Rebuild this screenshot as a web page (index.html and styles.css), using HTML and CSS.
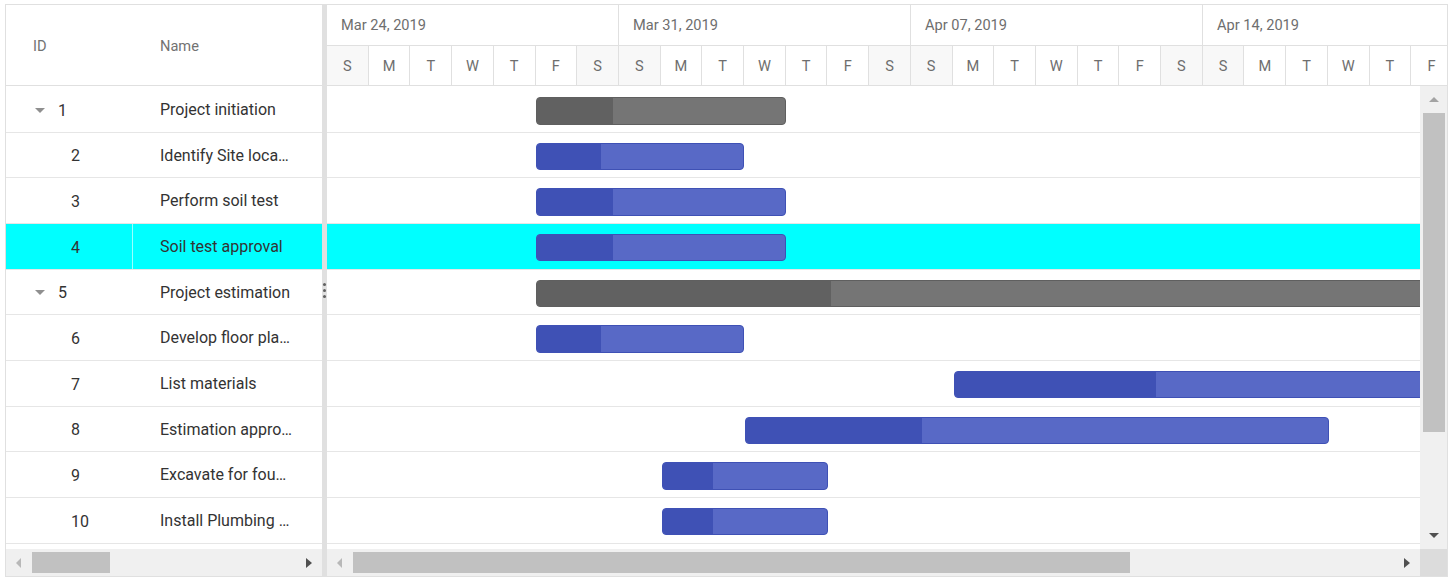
FILE: index.html
```html
<!DOCTYPE html>
<html>
<head>
  <meta charset="UTF-8" />
  <link rel="stylesheet" href="styles.css">
</head>
<body>

<div class="gantt">

  <div class="grid-pane">
    <div class="grid-header">
      <div class="hcell id">ID</div>
      <div class="hcell name">Name</div>
    </div>
    <div class="grid-body">
      <div class="row"><div class="cell id"><span class="caret"></span>1</div><div class="cell name">Project initiation</div></div>
      <div class="row"><div class="cell id child">2</div><div class="cell name">Identify Site location</div></div>
      <div class="row"><div class="cell id child">3</div><div class="cell name">Perform soil test</div></div>
      <div class="row selected"><div class="cell id child">4</div><div class="cell name">Soil test approval</div></div>
      <div class="row"><div class="cell id"><span class="caret"></span>5</div><div class="cell name">Project estimation</div></div>
      <div class="row"><div class="cell id child">6</div><div class="cell name">Develop floor plan for estimation</div></div>
      <div class="row"><div class="cell id child">7</div><div class="cell name">List materials</div></div>
      <div class="row"><div class="cell id child">8</div><div class="cell name">Estimation approval</div></div>
      <div class="row"><div class="cell id child">9</div><div class="cell name">Excavate for foundation</div></div>
      <div class="row"><div class="cell id child">10</div><div class="cell name">Install Plumbing lines</div></div>
    </div>
    <div class="hscroll">
      <div class="sbtn"><span class="arr left off"></span></div>
      <div class="track"><div class="thumb grid-thumb"></div></div>
      <div class="sbtn"><span class="arr right"></span></div>
    </div>
  </div>

  <div class="splitter"><span class="grip"></span></div>

  <div class="chart-pane">
    <div class="timeline">
      <div class="tier weeks">
        <div class="week">Mar 24, 2019</div>
        <div class="week">Mar 31, 2019</div>
        <div class="week">Apr 07, 2019</div>
        <div class="week">Apr 14, 2019</div>
      </div>
      <div class="tier days">
        <div class="day off">S</div><div class="day">M</div><div class="day">T</div><div class="day">W</div><div class="day">T</div><div class="day">F</div><div class="day off">S</div>
        <div class="day off">S</div><div class="day">M</div><div class="day">T</div><div class="day">W</div><div class="day">T</div><div class="day">F</div><div class="day off">S</div>
        <div class="day off">S</div><div class="day">M</div><div class="day">T</div><div class="day">W</div><div class="day">T</div><div class="day">F</div><div class="day off">S</div>
        <div class="day off">S</div><div class="day">M</div><div class="day">T</div><div class="day">W</div><div class="day">T</div><div class="day">F</div><div class="day off">S</div>
      </div>
    </div>

    <div class="chart-main">
      <div class="chart-body">
        <!-- one day = 41.714px, left/width come from start date and duration -->
        <div class="trow"><div class="bar parent" style="left:208.6px;width:250.3px"><div class="progress" style="width:76px"></div></div></div>
        <div class="trow"><div class="bar" style="left:208.6px;width:208.6px"><div class="progress" style="width:64px"></div></div></div>
        <div class="trow"><div class="bar" style="left:208.6px;width:250.3px"><div class="progress" style="width:76px"></div></div></div>
        <div class="trow selected"><div class="bar" style="left:208.6px;width:250.3px"><div class="progress" style="width:76px"></div></div></div>
        <div class="trow"><div class="bar parent" style="left:208.6px;width:1251px"><div class="progress" style="width:294px"></div></div></div>
        <div class="trow"><div class="bar" style="left:208.6px;width:208.6px"><div class="progress" style="width:64px"></div></div></div>
        <div class="trow"><div class="bar" style="left:626.5px;width:625.7px"><div class="progress" style="width:201px"></div></div></div>
        <div class="trow"><div class="bar" style="left:418px;width:584px"><div class="progress" style="width:176px"></div></div></div>
        <div class="trow"><div class="bar" style="left:334.5px;width:166.9px"><div class="progress" style="width:50px"></div></div></div>
        <div class="trow"><div class="bar" style="left:334.5px;width:166.9px"><div class="progress" style="width:50px"></div></div></div>
      </div>
      <div class="vscroll">
        <div class="sbtn"><span class="arr up off"></span></div>
        <div class="track"><div class="thumb v-thumb"></div></div>
        <div class="sbtn"><span class="arr down"></span></div>
      </div>
    </div>

    <div class="chart-foot">
      <div class="hscroll">
        <div class="sbtn"><span class="arr left off"></span></div>
        <div class="track"><div class="thumb chart-thumb"></div></div>
        <div class="sbtn"><span class="arr right"></span></div>
      </div>
      <div class="corner"></div>
    </div>
  </div>

</div>

</body>
</html>
```

FILE: styles.css
```css
body {
    margin: 0;
    font-family: Roboto, "Noto Sans", sans-serif;
    background: #fff;
}

.gantt {
    display: flex;
    width: 1443px;
    height: 573px;
    margin: 4px 0 0 5px;
    border: 1px solid #e0e0e0;
    box-sizing: border-box;
}

/* ---- left grid ---- */

.grid-pane {
    width: 316px;
    display: flex;
    flex-direction: column;
}

.grid-header {
    display: flex;
    height: 81px;
    border-bottom: 1px solid #e0e0e0;
    box-sizing: border-box;
}

.hcell {
    display: flex;
    align-items: center;
    padding: 2px 0 0 27px;
    font-size: 14.6px;
    color: #727272;
    box-sizing: border-box;
}

.id {
    width: 127px;
    flex: none;
}

.name {
    flex: 1;
    min-width: 0;
}

.grid-body {
    flex: 1;
    padding-top: 1px;
    overflow: hidden;
}

.row {
    display: flex;
    height: 45.67px;
    border-bottom: 1px solid #e6e6e6;
    box-sizing: border-box;
}

.row.selected,
.trow.selected {
    background: #00ffff;
}

.cell {
    display: flex;
    align-items: center;
    padding-top: 2px;
    font-size: 16px;
    color: #333;
    box-sizing: border-box;
    white-space: nowrap;
}

.cell.id {
    padding-left: 29px;
    border-right: 1px solid rgba(255, 255, 255, 0.6);
}

.cell.id.child {
    padding-left: 65px;
}

.cell.name {
    display: block;
    line-height: 42.6px;
    padding: 2px 30px 0 27px;
    overflow: hidden;
    text-overflow: ellipsis;
}

.caret {
    width: 0;
    height: 0;
    border-style: solid;
    border-width: 5px 5px 0;
    border-color: #8f8f8f transparent;
    margin-right: 13px;
}

/* ---- splitter ---- */

.splitter {
    width: 5px;
    background: #e0e0e0;
    display: flex;
    align-items: center;
    justify-content: center;
}

.grip {
    width: 3px;
    height: 3px;
    border-radius: 50%;
    background: #616161;
    box-shadow: 0 -6px 0 #616161, 0 6px 0 #616161;
}

/* ---- chart side ---- */

.chart-pane {
    flex: 1;
    min-width: 0;
    display: flex;
    flex-direction: column;
}

.timeline {
    height: 81px;
    border-bottom: 1px solid #e0e0e0;
    box-sizing: border-box;
    overflow: hidden;
}

.tier {
    display: flex;
}

.weeks {
    height: 40px;
    border-bottom: 1px solid #e0e0e0;
}

.week {
    flex: none;
    width: 292px;
    padding-left: 14px;
    border-right: 1px solid #e0e0e0;
    box-sizing: border-box;
    display: flex;
    align-items: center;
    font-size: 14.6px;
    color: #6e6e6e;
}

.days {
    height: 39px;
}

.day {
    flex: none;
    width: 41.714px;
    border-right: 1px solid #e0e0e0;
    box-sizing: border-box;
    display: flex;
    align-items: center;
    justify-content: center;
    font-size: 14.6px;
    color: #6e6e6e;
}

.day.off {
    background: #f8f8f8;
}

.chart-main {
    flex: 1;
    display: flex;
    min-height: 0;
}

.chart-body {
    flex: 1;
    position: relative;
    padding-top: 1px;
    overflow: hidden;
}

.trow {
    position: relative;
    height: 45.67px;
    border-bottom: 1px solid #e6e6e6;
    box-sizing: border-box;
}

.bar {
    position: absolute;
    top: 10px;
    height: 27.5px;
    background: #5869c6;
    border: 1px solid #3f51b5;
    border-radius: 4px;
    box-sizing: border-box;
    overflow: hidden;
}

.bar .progress {
    height: 100%;
    background: #3f51b5;
}

.bar.parent {
    background: #757575;
    border-color: #5f5f5f;
}

.bar.parent .progress {
    background: #616161;
}

/* ---- scrollbars ---- */

.vscroll {
    width: 27px;
    background: #f0f0f0;
    display: flex;
    flex-direction: column;
}

.hscroll {
    height: 27px;
    background: #f0f0f0;
    display: flex;
}

.chart-foot {
    display: flex;
}

.chart-foot .hscroll {
    flex: 1;
}

.corner {
    width: 27px;
    height: 27px;
    background: #dcdcdc;
}

.sbtn {
    flex: none;
    width: 27px;
    height: 27px;
    display: flex;
    align-items: center;
    justify-content: center;
}

.track {
    flex: 1;
    display: flex;
    align-items: center;
}

.vscroll .track {
    align-items: flex-start;
    justify-content: center;
}

.thumb {
    background: #c1c1c1;
}

.grid-thumb {
    width: 78px;
    height: 21px;
    margin-left: -1px;
}

.chart-thumb {
    width: 777px;
    height: 21px;
    margin-left: -1px;
}

.v-thumb {
    width: 22px;
    height: 319px;
}

.arr {
    width: 0;
    height: 0;
    border-style: solid;
}

.arr.left {
    border-width: 5.5px 5px 5.5px 0;
    border-color: transparent #505050 transparent transparent;
    margin-right: 2px;
}

.arr.right {
    border-width: 5.5px 0 5.5px 6px;
    border-color: transparent transparent transparent #505050;
}

.arr.up {
    border-width: 0 5px 5px;
    border-color: transparent transparent #505050;
}

.arr.down {
    border-width: 5px 5px 0;
    border-color: #505050 transparent transparent;
}

.arr.left.off {
    border-right-color: #b8b8b8;
}

.arr.up.off {
    border-bottom-color: #a3a3a3;
}
```
